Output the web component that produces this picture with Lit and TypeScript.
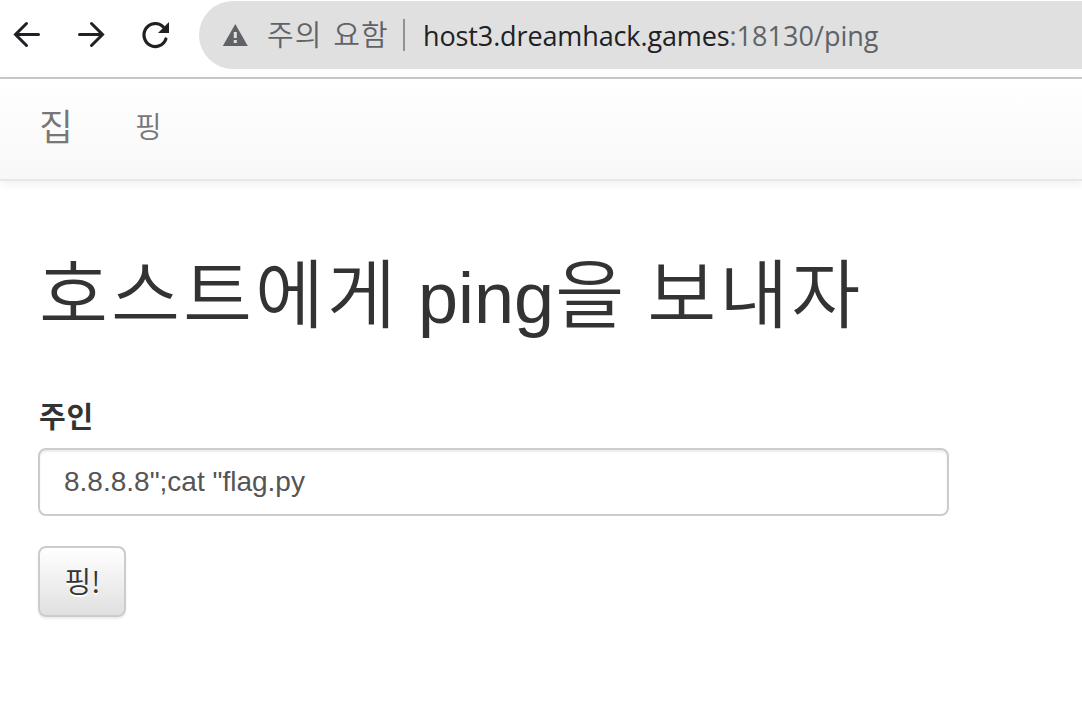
import { LitElement, css, html } from "lit";
import { customElement, property } from "lit/decorators.js";

@customElement("browser-bar")
export class BrowserBar extends LitElement {
    @property() host = "";
    @property() path = "";

    static styles = css`
        :host {
            display: block;
        }

        .bar {
            display: flex;
            box-sizing: border-box;
            height: 79px;
            padding: 1px 0 8px 11px;
            border-bottom: 2px solid #cacaca;
            background: #fff;
        }

        .tools {
            display: flex;
            align-items: center;
            gap: 32px;
            width: 188px;
            height: 68px;
            flex: none;
        }

        .icon {
            display: block;
            width: 32px;
            height: 32px;
            flex: none;
        }

        .omnibox {
            display: flex;
            align-items: center;
            flex: 1;
            height: 68px;
            padding-left: 23px;
            border-radius: 34px 0 0 34px;
            background: #e0e0e0;
            color: #5f6368;
            font-family: "Open Sans", "Noto Sans", sans-serif;
            font-size: 27px;
            white-space: nowrap;
        }

        .warning {
            display: block;
            width: 26px;
            height: 24px;
            flex: none;
        }

        .security {
            box-sizing: border-box;
            width: 137px;
            height: 68px;
            padding-left: 19px;
            font-family: "Noto Sans CJK KR", sans-serif;
            font-size: 29px;
            font-weight: 350;
            letter-spacing: 1.1px;
            word-spacing: 3px;
            line-height: 64px;
        }

        .divider {
            width: 2px;
            height: 32px;
            margin: 0 18px 0 18px;
            background: #919191;
        }

        .url {
            letter-spacing: 0.03px;
        }

        .host {
            color: #202124;
            letter-spacing: -0.12px;
        }
    `;

    render() {
        return html`
            <div class="bar">
                <div class="tools">
                    <svg class="icon" viewBox="0 0 32 32" fill="none" stroke="#202124" stroke-width="3" stroke-linecap="round">
                        <path d="M27.5 15.5H5M15.5 4.5 4.5 15.5 15.5 26.5"></path>
                    </svg>
                    <svg class="icon" viewBox="0 0 32 32" fill="none" stroke="#202124" stroke-width="3" stroke-linecap="round">
                        <path d="M4.5 15.5H27M16.5 4.5 27.5 15.5 16.5 26.5"></path>
                    </svg>
                    <svg class="icon" viewBox="0 0 32 32">
                        <path
                            d="M26.9 20A11.3 11.5 0 1 1 24.4 8"
                            fill="none"
                            stroke="#202124"
                            stroke-width="3.2"
                            stroke-linecap="round"
                        ></path>
                        <path d="M30 3V14H19Z" fill="#202124"></path>
                    </svg>
                </div>
                <div class="omnibox">
                    <svg class="warning" viewBox="0 0 26 24">
                        <path d="M13.3 1 25.8 23H.8Z" fill="#5f6368"></path>
                        <path d="M11.8 9h3v6h-3zM11.8 17h3v3h-3z" fill="#e0e0e0"></path>
                    </svg>
                    <span class="security">주의 요함</span>
                    <span class="divider"></span>
                    <span class="url"><span class="host">${this.host}</span>${this.path}</span>
                </div>
            </div>
        `;
    }
}

@customElement("app-root")
export class AppRoot extends LitElement {
    static styles = css`
        :host {
            display: block;
            min-height: 720px;
            background: #fff;
            color: #333;
            font-family: "Liberation Sans", "Noto Sans CJK KR", sans-serif;
            font-size: 28px;
        }

        .navbar {
            display: flex;
            align-items: center;
            box-sizing: border-box;
            height: 102px;
            padding: 0 0 8px 39px;
            border-bottom: 2px solid #e7e7e7;
            background: linear-gradient(to bottom, #fff 0%, #f8f8f8 100%);
            box-shadow: 0 2px 10px rgba(0, 0, 0, 0.075);
            color: #777;
            font-family: "Noto Sans CJK KR", sans-serif;
            font-weight: 350;
        }

        .brand {
            width: 96px;
            font-size: 37px;
            line-height: 56px;
        }

        .link {
            font-size: 29px;
            line-height: 56px;
        }

        .container {
            padding: 53px 38px 0;
        }

        .title {
            margin: 0;
            height: 114px;
            font-size: 72px;
            font-weight: 400;
            line-height: 114px;
            white-space: nowrap;
        }

        .ko {
            position: relative;
            top: -1px;
            left: 1px;
            font-family: "Noto Sans CJK KR", sans-serif;
            font-size: 75px;
            font-weight: 350;
            letter-spacing: 3px;
        }

        .label {
            display: block;
            margin: 47px 0 13px;
            height: 40px;
            padding-left: 1px;
            font-family: "Noto Sans CJK KR", sans-serif;
            font-size: 29px;
            font-weight: 700;
            letter-spacing: 0.8px;
            line-height: 40px;
        }

        .input {
            display: block;
            box-sizing: border-box;
            width: 911px;
            height: 68px;
            padding: 0 24px;
            border: 2px solid #ccc;
            border-radius: 8px;
            background: #fff;
            box-shadow: inset 0 2px 2px rgba(0, 0, 0, 0.075);
            color: #555;
            font: inherit;
        }

        .button {
            display: block;
            box-sizing: border-box;
            width: 88px;
            height: 71px;
            margin-top: 30px;
            padding: 0 0 4px 1px;
            border: 2px solid #ccc;
            border-radius: 8px;
            background: linear-gradient(to bottom, #fff 0%, #e0e0e0 100%);
            box-shadow: inset 0 2px 0 rgba(255, 255, 255, 0.15), 0 2px 2px rgba(0, 0, 0, 0.075);
            color: #333;
            font-family: "Noto Sans CJK KR", sans-serif;
            font-size: 29px;
            font-weight: 350;
            text-shadow: 0 2px 0 #fff;
        }
    `;

    render() {
        return html`
            <browser-bar host="host3.dreamhack.games" path=":18130/ping"></browser-bar>
            <nav class="navbar">
                <span class="brand">집</span>
                <span class="link">핑</span>
            </nav>
            <main class="container">
                <h1 class="title">
                    <span class="ko">호스트에게</span> ping<span class="ko">을</span> <span class="ko">보내자</span>
                </h1>
                <label class="label" for="host">주인</label>
                <input class="input" id="host" type="text" .value=${'8.8.8.8";cat "flag.py'} />
                <button class="button" type="button">핑!</button>
            </main>
        `;
    }
}
